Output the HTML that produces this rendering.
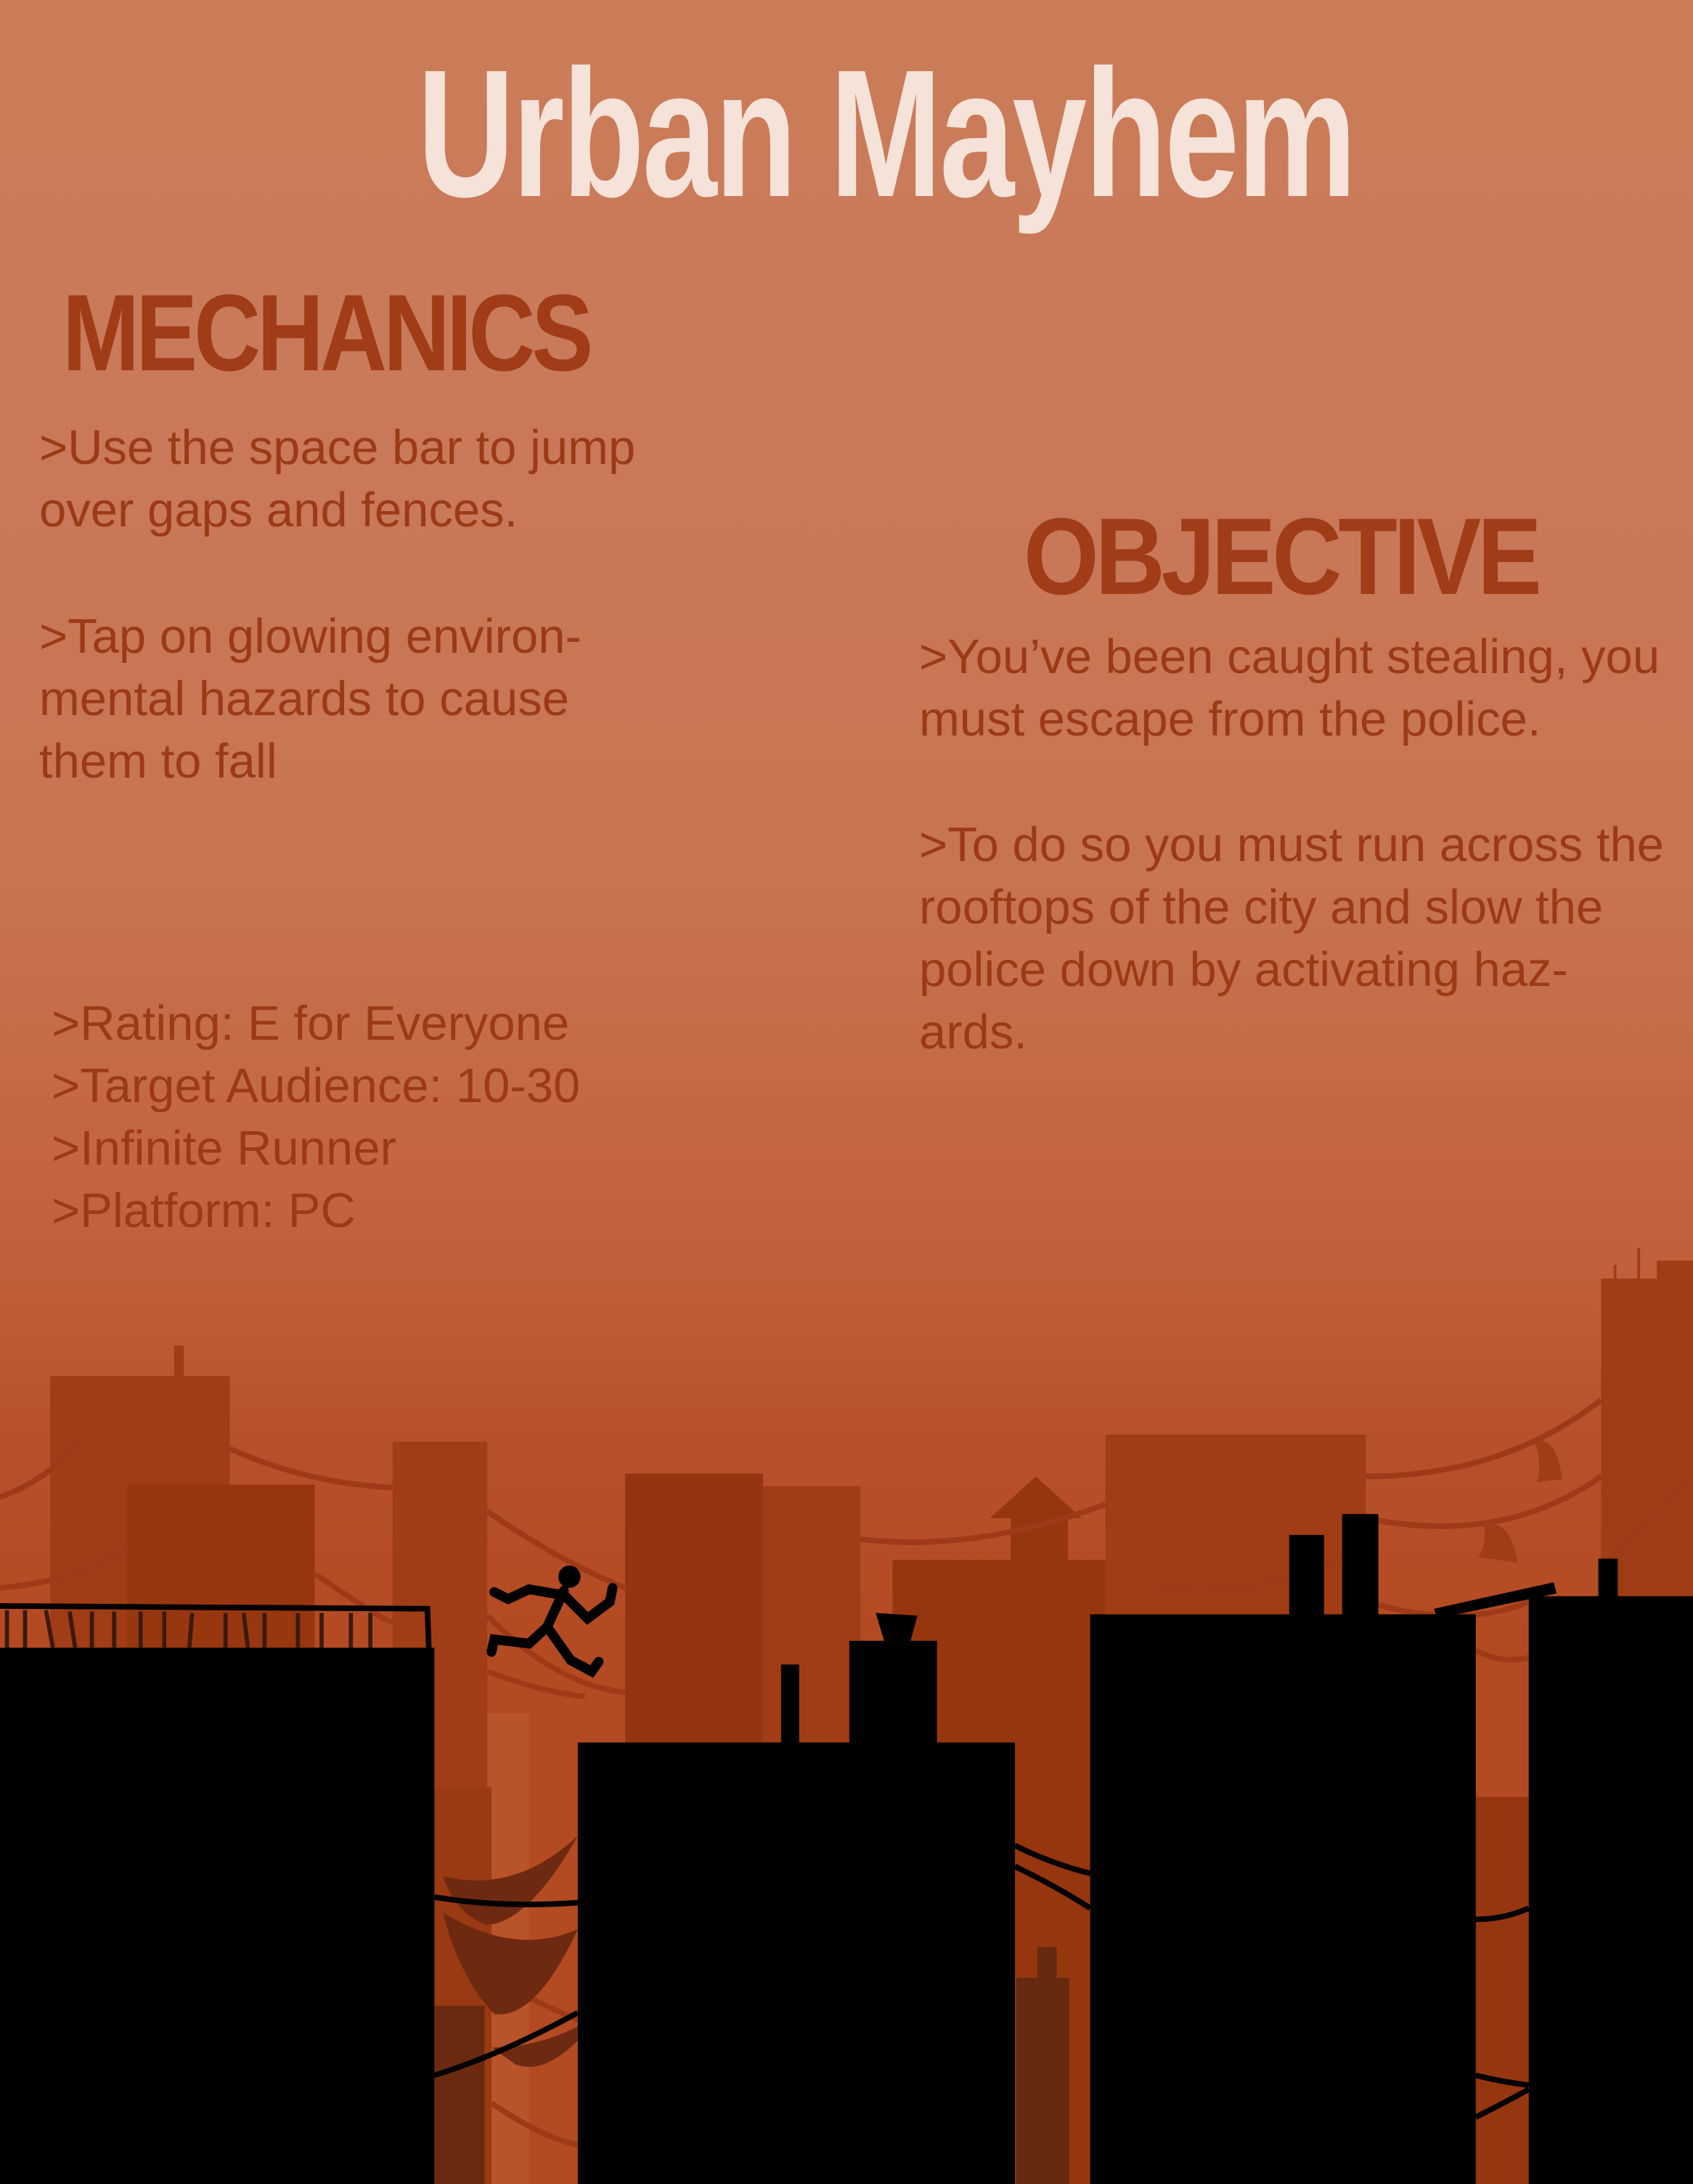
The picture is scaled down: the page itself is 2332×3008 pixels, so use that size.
<!DOCTYPE html>
<html><head><meta charset="utf-8">
<style>
html,body{margin:0;padding:0;}
body{width:2332px;height:3008px;position:relative;overflow:hidden;
background:linear-gradient(180deg,#ca7c58 0%,#c9795a 20%,#c77452 40%,#c1603a 58%,#b8502a 66%,#b44a22 75%,#b44a22 100%);
font-family:"Liberation Sans",sans-serif;}
.t{position:absolute;color:#9c3a17;font-size:67px;line-height:86px;white-space:nowrap;}
.h{position:absolute;font-weight:bold;white-space:nowrap;transform-origin:0 0;}
svg{position:absolute;left:0;top:0;}
</style></head><body>
<div class="h" style="left:575px;top:40px;font-size:250px;color:#f5e2d9;transform:scaleX(0.74);letter-spacing:-4px;">Urban Mayhem</div>
<div class="h" style="left:86px;top:372px;font-size:150px;color:#a03c17;transform:scaleX(0.85);letter-spacing:-6px;">MECHANICS</div>
<div class="h" style="left:1410px;top:680px;font-size:150px;color:#a03c17;transform:scaleX(0.89);letter-spacing:-6px;">OBJECTIVE</div>

<div class="t" style="left:54px;top:574px;">&gt;Use the space bar to jump<br>over gaps and fences.</div>
<div class="t" style="left:54px;top:834px;">&gt;Tap on glowing environ-<br>mental hazards to cause<br>them to fall</div>
<div class="t" style="left:71px;top:1367px;">&gt;Rating: E for Everyone<br>&gt;Target Audience: 10-30<br>&gt;Infinite Runner<br>&gt;Platform: PC</div>
<div class="t" style="left:1266px;top:862px;">&gt;You’ve been caught stealing, you<br>must escape from the police.</div>
<div class="t" style="left:1266px;top:1121px;">&gt;To do so you must run across the<br>rooftops of the city and slow the<br>police down by activating haz-<br>ards.</div>

<svg width="2332" height="3008" viewBox="0 0 1216 1568" preserveAspectRatio="none">
<g fill="#a03c16">
<rect x="36" y="988" width="129" height="580"/>
<rect x="125" y="966" width="7" height="22"/>
<rect x="91" y="1066" width="135" height="502" fill="#98360f"/>
<rect x="282" y="1035" width="68" height="533"/>
<rect x="449" y="1058" width="99" height="510" fill="#943410"/>
<rect x="548" y="1067" width="70" height="501"/>
<rect x="641" y="1120" width="193" height="448" fill="#96360f"/>
<polygon points="711,1090 744,1060 777,1090" fill="#96360f"/>
<rect x="726" y="1089" width="41" height="32" fill="#96360f"/>
<rect x="794" y="1030" width="187" height="538"/>
<rect x="1150" y="918" width="66" height="650"/>
<rect x="1190" y="905" width="26" height="15"/>
<rect x="1159" y="908" width="2" height="12"/>
<rect x="1176" y="896" width="2" height="24"/>
<rect x="350" y="1230" width="30" height="338" fill="#b9532a"/>
<rect x="312" y="1283" width="41" height="285" fill="#9a3a12"/>
<rect x="312" y="1440" width="36" height="128" fill="#6b2a10"/>
<rect x="730" y="1420" width="38" height="148" fill="#652a10"/>
<rect x="745" y="1398" width="14" height="24" fill="#652a10"/>
<rect x="1060" y="1290" width="38" height="278" fill="#963610"/>
</g>
<g fill="none" stroke="#9e3a18" stroke-width="4">
<path d="M0,1075 Q40,1060 60,1030 M165,1040 Q220,1065 282,1068 M350,1085 Q400,1120 449,1140 M618,1105 Q700,1115 794,1080 M981,1060 Q1080,1060 1150,1005"/>
<path d="M0,1140 Q60,1135 91,1110 M226,1130 Q270,1160 282,1165 M350,1160 Q400,1210 449,1215 M618,1190 Q640,1200 641,1200 M834,1140 Q900,1150 981,1110 M981,1090 Q1080,1110 1150,1060"/>
<path d="M1150,1125 Q1190,1090 1216,1060 M981,1150 Q1050,1170 1098,1150 M350,1200 Q390,1215 420,1218 M1060,1185 Q1080,1195 1098,1190"/>
<path d="M353,1420 Q390,1440 415,1450 M353,1510 Q390,1535 415,1540"/>
</g>
<g fill="#a03c16"><path d="M1102,1035 Q1118,1030 1122,1062 L1104,1064 Q1108,1050 1102,1035Z"/><path d="M1066,1095 Q1085,1090 1090,1122 L1062,1118 Q1068,1108 1066,1095Z"/></g>
<g fill="#6e2a10">
<path d="M318,1347 Q370,1360 415,1318 Q380,1380 350,1382 Q328,1375 318,1347Z"/>
<path d="M318,1373 Q370,1405 415,1385 Q385,1450 355,1446 Q330,1420 318,1373Z"/>
<path d="M353,1470 Q385,1470 415,1455 L415,1465 Q390,1490 370,1482Z"/>
</g>
<g fill="#000">
<rect x="0" y="1183" width="312" height="385"/>
<rect x="415" y="1251" width="314" height="317"/>
<rect x="561" y="1195" width="13" height="58"/>
<rect x="610" y="1178" width="63" height="75"/>
<polygon points="629,1158 659,1160 654,1178 635,1178"/>
<rect x="783" y="1159" width="277" height="409"/>
<rect x="926" y="1102" width="25" height="60"/>
<rect x="964" y="1087" width="26" height="75"/>
<rect x="1098" y="1146" width="118" height="422"/>
<rect x="1148" y="1119" width="14" height="30"/>
<polygon points="1030,1155 1116,1136 1118,1144 1032,1162"/>
</g>
<g fill="none" stroke="#000" stroke-width="4">
<path d="M0,1153 L307,1155 L308,1184"/>
<path d="M312,1362 Q360,1370 415,1366 M729,1325 Q755,1338 783,1345 M729,1340 Q760,1355 783,1370 M1060,1378 Q1080,1378 1098,1370 M312,1490 Q360,1475 415,1445 M1060,1490 Q1080,1495 1098,1497 M1060,1520 Q1080,1510 1098,1500"/>
</g>
<g stroke="#3a1a0c" stroke-width="3">
<path d="M5,1156V1183 M18,1156V1183 M33,1156L38,1183 M50,1157L54,1183 M66,1157V1183 M82,1157V1183 M101,1157V1183 M118,1157V1183 M138,1158L136,1183 M162,1158V1183 M175,1158L178,1183 M190,1158V1183 M214,1158V1183 M231,1158V1183 M252,1158V1183 M266,1158V1183"/>
</g>
<g stroke="#000" stroke-width="7" stroke-linecap="round" fill="none">
<circle cx="409" cy="1132" r="8" fill="#000" stroke="none"/>
<path d="M405,1142 L393,1168 L380,1180 L355,1177 L353,1186"/>
<path d="M393,1168 L410,1192 L425,1200 L430,1193"/>
<path d="M403,1145 L380,1141 L365,1148 L355,1143"/>
<path d="M405,1145 L422,1162 L438,1150 L440,1140"/>
</g>
</svg>
</body></html>
